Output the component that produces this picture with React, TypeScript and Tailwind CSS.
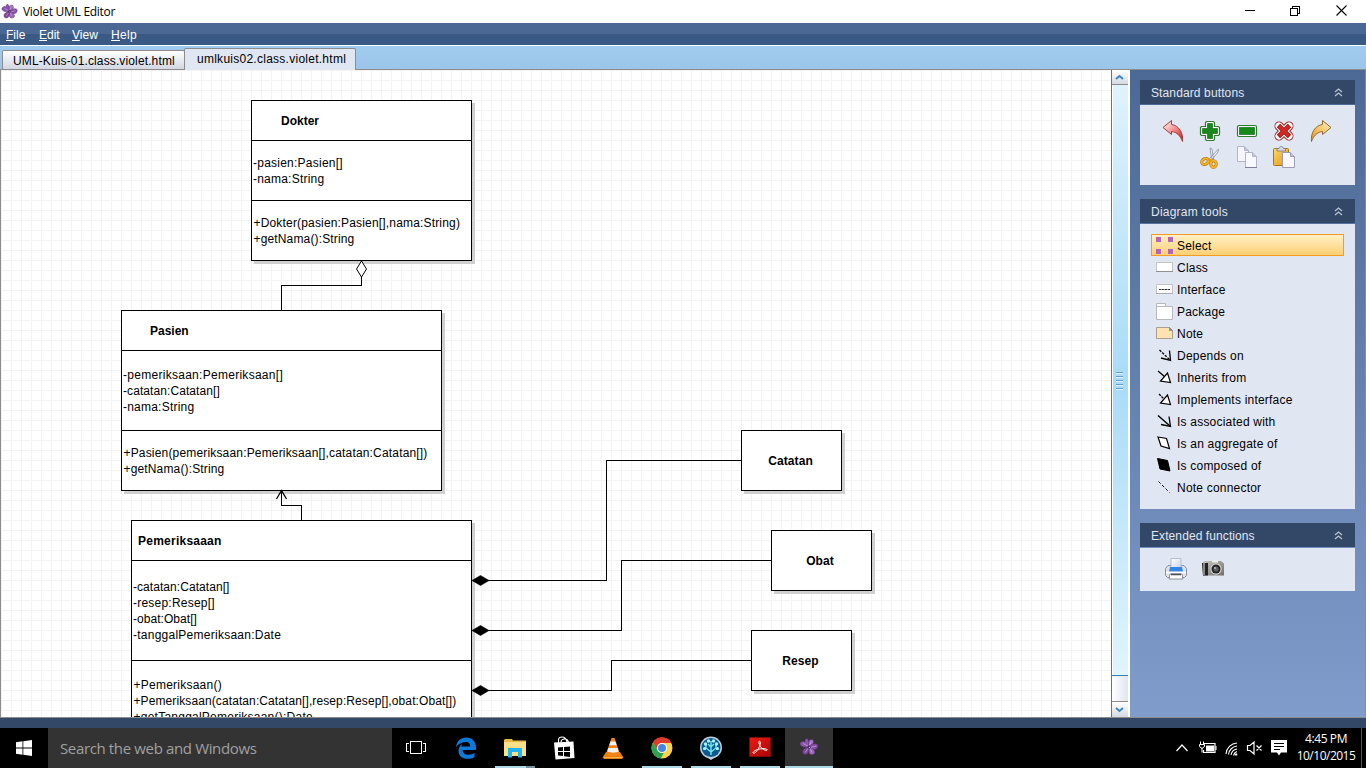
import React from "react";

function VioletFlower({ size }: { size: number }) {
  return (
    <svg width={size} height={size} viewBox="0 0 20 20" className="shrink-0">
      <g stroke="#4c2a63" strokeWidth=".5">
        <path d="M10 10C4 11 1 9 1 6.500 2 4 5 3.500 6 5 5.500 1.500 8 .8 9 2.500 10 4 10.500 7 10 10Z" fill="#8a55ab" />
        <path d="M10 10C9 6 10 2.500 12 2.500 14 2 15 4 14.500 5.500 14 7.500 12 9 10 10Z" fill="#a672c4" />
        <path d="M10 10C13 6 17.500 6 19 8 19.500 10 18 12.500 15.500 12.500 13 13 11 12 10 10Z" fill="#8450a6" />
        <path d="M10 10C14 11.500 17 14 15.500 16.500 13.500 18.500 10.500 18 10 15.500Z" fill="#9c66bd" />
        <path d="M10 10C10.500 15 8.500 18 6 17.500 3.500 17.500 3 15 4 13 5.500 11 8 10 10 10Z" fill="#7c479c" />
      </g>
      <path d="M4 6.500 9 9M12 5 10.500 8M17 9 12 10.500M13 15.500 11 12M6 15.500 9 11.500" stroke="#cfa5e2" strokeWidth=".7" />
      <circle cx="10" cy="10" r="1.500" fill="#4c2763" />
      <circle cx="10.500" cy="10.300" r=".6" fill="#f3c75b" />
    </svg>
  );
}

function TitleBar() {
  return (
    <div className="flex h-[23px] items-center justify-between bg-white pl-[1px] pr-[18px]">
      <div className="flex items-center gap-[5px]">
        <VioletFlower size={17} />
        <span className="font-['Open_Sans',sans-serif] text-[12px] leading-[22px] tracking-[-0.28px] text-black">Violet UML Editor</span>
      </div>
      <svg width="103" height="12" viewBox="0 0 103 12" className="mb-[3px]" fill="none" stroke="#000" shapeRendering="crispEdges">
        <path d="M0 6.500h10" />
        <path d="M45.500 4.500h7v7h-7zM47.500 4V2.500h7v7H53" />
        <path d="m91.500 1.500 10 10m0-10-10 10" shapeRendering="auto" strokeWidth="1.100" />
      </svg>
    </div>
  );
}

function MenuBar() {
  return (
    <div className="flex h-[22px] items-center bg-linear-to-b from-[#4b6793] from-50% to-[#3a5985] to-50% pl-[6px] pt-[2px] text-[12px] leading-[20px] text-white">
      {[
        { key: "F", rest: "ile", w: "w-[33px]" },
        { key: "E", rest: "dit", w: "w-[33px]" },
        { key: "V", rest: "iew", w: "w-[39px]" },
        { key: "H", rest: "elp", w: "w-[40px] tracking-[0.3px]" },
      ].map((m) => (
        <span key={m.key} className={m.w}>
          <span className="underline underline-offset-1">{m.key}</span>
          {m.rest}
        </span>
      ))}
    </div>
  );
}

function TabStrip() {
  return (
    <div className="flex h-[25px] items-end border-t border-b border-t-white border-b-[#8c8c8c] bg-linear-to-b from-[#9fcbef] to-[#9cc6e9] pl-[2px] text-[12px] text-black">
      <div className="flex h-[19px] w-[183px] items-center rounded-t-[2px] border border-b-0 border-[#8c8c8c] bg-linear-to-b from-white to-[#d2d7e2] pl-[10px] pt-[2px] tracking-[0.13px]">
        UML-Kuis-01.class.violet.html
      </div>
      <div className="-mb-px -ml-px flex h-[22px] w-[172px] items-center rounded-t-[2px] border border-b-0 border-[#8c8c8c] bg-[#e0e6f2] pb-[2px] pl-[12px] tracking-[0.26px]">
        umlkuis02.class.violet.html
      </div>
    </div>
  );
}

type Line = { text: string; track: string };

type ClassNode = {
  place: string;
  title: string;
  titleBox: string;
  attrs: Line[];
  attrBox: string;
  methods: Line[];
  methodBox: string;
};

const classNodes: ClassNode[] = [
  {
    place: "left-[250px] top-[30px] w-[221px] h-[161px]",
    title: "Dokter",
    titleBox: "pl-[29px]",
    attrs: [
      { text: "-pasien:Pasien[]", track: "tracking-[0.24px]" },
      { text: "-nama:String", track: "tracking-[0.22px]" },
    ],
    attrBox: "h-[60px] pt-[14px]",
    methods: [
      { text: "+Dokter(pasien:Pasien[],nama:String)", track: "tracking-[0.17px]" },
      { text: "+getNama():String", track: "tracking-[0.15px]" },
    ],
    methodBox: "pt-[14px]",
  },
  {
    place: "left-[120px] top-[240px] w-[321px] h-[181px]",
    title: "Pasien",
    titleBox: "pl-[28px]",
    attrs: [
      { text: "-pemeriksaan:Pemeriksaan[]", track: "tracking-[0.28px]" },
      { text: "-catatan:Catatan[]", track: "tracking-[0.08px]" },
      { text: "-nama:String", track: "tracking-[0.22px]" },
    ],
    attrBox: "h-[80px] pt-[16px]",
    methods: [
      { text: "+Pasien(pemeriksaan:Pemeriksaan[],catatan:Catatan[])", track: "tracking-[0.17px]" },
      { text: "+getNama():String", track: "tracking-[0.15px]" },
    ],
    methodBox: "pt-[14px]",
  },
  {
    place: "left-[130px] top-[450px] w-[341px] h-[221px]",
    title: "Pemeriksaaan",
    titleBox: "pl-[6px] tracking-[0.24px]",
    attrs: [
      { text: "-catatan:Catatan[]", track: "tracking-[0.06px]" },
      { text: "-resep:Resep[]", track: "tracking-[0.22px]" },
      { text: "-obat:Obat[]", track: "tracking-[0.05px]" },
      { text: "-tanggalPemeriksaan:Date", track: "tracking-[0.25px]" },
    ],
    attrBox: "h-[100px] pt-[18px]",
    methods: [
      { text: "+Pemeriksaan()", track: "tracking-[0.24px]" },
      { text: "+Pemeriksaan(catatan:Catatan[],resep:Resep[],obat:Obat[])", track: "tracking-[0.1px]" },
      { text: "+getTanggalPemeriksaan():Date", track: "tracking-[0.24px]" },
    ],
    methodBox: "pt-[16px]",
  },
];

const simpleNodes = [
  { place: "left-[740px] top-[360px] pr-[2px]", title: "Catatan" },
  { place: "left-[770px] top-[460px] pr-[3px]", title: "Obat" },
  { place: "left-[750px] top-[560px] pr-[2px]", title: "Resep" },
];

function Canvas() {
  return (
    <div className="relative w-[1111px] overflow-hidden border-l border-[#8c8c8c] bg-white text-[12px] leading-[16px] text-black">
      <svg className="absolute left-0 top-0" width="1110" height="647" viewBox="1 70 1110 647">
        <defs>
          <pattern id="grid" x="1" y="70" width="10" height="10" patternUnits="userSpaceOnUse">
            <path d="M0 .5h10M.5 0v10" stroke="#f3f3f3" shapeRendering="crispEdges" />
          </pattern>
        </defs>
        <rect x="1" y="70" width="1110" height="647" fill="url(#grid)" />
      </svg>
      {classNodes.map((n) => (
        <div key={n.title} className={`absolute flex flex-col border border-black bg-white shadow-[3px_3px_0_#d0d0d0] ${n.place}`}>
          <div className={`h-[40px] shrink-0 border-b border-black pt-[12px] font-bold ${n.titleBox}`}>{n.title}</div>
          <div className={`shrink-0 border-b border-black pl-px ${n.attrBox}`}>
            {n.attrs.map((a) => (
              <div key={a.text} className={`whitespace-nowrap ${a.track}`}>{a.text}</div>
            ))}
          </div>
          <div className={`pl-[1.5px] ${n.methodBox}`}>
            {n.methods.map((a) => (
              <div key={a.text} className={`whitespace-nowrap ${a.track}`}>{a.text}</div>
            ))}
          </div>
        </div>
      ))}
      {simpleNodes.map((n) => (
        <div key={n.title} className={`absolute flex h-[61px] w-[101px] items-center justify-center border border-black bg-white font-bold tracking-[0.1px] shadow-[3px_3px_0_#d0d0d0] ${n.place}`}>
          {n.title}
        </div>
      ))}
      <svg className="absolute left-0 top-0" width="1110" height="647" viewBox="1 70 1110 647" fill="none" stroke="#000">
        <g shapeRendering="crispEdges">
          <path d="M361.500 277v8.500h-80V310" />
          <path d="M281.500 491v14.500h20V520" />
          <path d="M488 580.500h118.500v-120H741" />
          <path d="M488 630.500h133.500v-70H771" />
          <path d="M488 690.500h123.500v-30H751" />
        </g>
        <path d="M361.500 261l5 8-5 8-5-8z" fill="#fff" />
        <path d="M276.500 499l5-8.500 5 8.500" strokeWidth="1.300" />
        <path d="M472 580.500l8.500-5 8.500 5-8.500 5zM472 630.500l8.500-5 8.500 5-8.500 5zM472 690.500l8.500-5 8.500 5-8.500 5z" fill="#000" strokeWidth=".6" />
      </svg>
    </div>
  );
}

function ScrollBar() {
  return (
    <div className="flex w-[19px] flex-col border-l border-r-2 border-l-[#3c7fb1] border-r-white">
      <div className="flex h-[15px] items-center justify-center border-b border-[#8c8c8c] bg-linear-to-b from-white to-[#d4d9e3] pr-px">
        <svg width="9" height="6" viewBox="0 0 9 6" fill="none" stroke="#3a87bd" strokeWidth="2"><path d="m1 5 3.500-3L8 5" /></svg>
      </div>
      <div className="flex h-[590px] flex-col items-center justify-center gap-[3px] border-l border-white bg-linear-to-b from-[#dff3fd] via-[#a9dbf7] to-[#e0f5fd] pr-[2px]">
        {[0, 1, 2, 3, 4].map((i) => (
          <div key={i} className="h-px w-[7px] bg-[#5e9fd0] shadow-[0_1px_0_#e3f4fd]" />
        ))}
      </div>
      <div className="h-[27px] border-t border-b border-t-[#3c7fb1] border-b-[#8c8c8c] bg-linear-to-r from-white to-[#dfe5f1]" />
      <div className="flex flex-1 items-center justify-center bg-linear-to-b from-white to-[#d4d9e3] pr-px">
        <svg width="9" height="6" viewBox="0 0 9 6" fill="none" stroke="#3a87bd" strokeWidth="2"><path d="m1 1 3.500 3L8 1" /></svg>
      </div>
    </div>
  );
}

function Panel({ title, track, body, children }: { title: string; track: string; body: string; children: React.ReactNode }) {
  return (
    <section className="w-[215px]">
      <div className="flex h-[24px] items-center justify-between bg-[#334866] pl-[11px] pr-[12px] text-[12px] text-[#e0e6f2]">
        <span className={`pt-[2px] ${track}`}>{title}</span>
        <svg width="9" height="9" viewBox="0 0 9 9" fill="none" stroke="#b8c2d3" strokeWidth="1.300"><path d="m1 4 3.500-3L8 4M1 8l3.500-3L8 8" /></svg>
      </div>
      <div className={`mt-px bg-[#e0e6f2] ${body}`}>{children}</div>
    </section>
  );
}

function StandardButtons() {
  return (
    <Panel title="Standard buttons" track="tracking-[0.12px]" body="h-[80px] pr-[2px] pt-[14px]">
      <div className="flex h-[25px] justify-center gap-[15px]">
        <svg width="22" height="24" viewBox="0 0 22 24">
          <defs><linearGradient id="undo" x2="1" y2="1"><stop stopColor="#fff" /><stop offset=".45" stopColor="#f59a9a" /><stop offset="1" stopColor="#d20f0f" /></linearGradient></defs>
          <path d="M1 8.500 9.500 1.500V5.500C17 6.500 21.500 14 20.500 22.500 18.500 17 15 13 9.500 12.500V15.500z" fill="url(#undo)" stroke="#a33e3e" />
        </svg>
        <svg width="22" height="24" viewBox="0 0 22 24">
          <path d="M7.500 2.500h7l1 1v4h4l1 1v7l-1 1h-4v4l-1 1h-7l-1-1v-4h-4l-1-1v-7l1-1h4v-4z" fill="#fff" stroke="#2f7c2f" strokeWidth="1.200" />
          <path d="M8.500 4.500h5v5h5v5h-5v5h-5v-5h-5v-5h5z" fill="#16891a" stroke="#075d0a" strokeWidth=".6" />
        </svg>
        <svg width="22" height="24" viewBox="0 0 22 24">
          <rect x="1.500" y="6.500" width="19" height="11" rx="1.500" fill="#fff" stroke="#2f7c2f" strokeWidth="1.200" />
          <path d="M3.500 8.500h15v7h-15z" fill="#16891a" stroke="#075d0a" strokeWidth=".6" />
        </svg>
        <svg width="22" height="24" viewBox="0 0 22 24">
          <path d="M6 7 16 17M16 7 6 17" stroke="#a11717" strokeWidth="9" strokeLinecap="round" />
          <path d="M6 7 16 17M16 7 6 17" stroke="#fff" strokeWidth="7.200" strokeLinecap="round" />
          <path d="M5.500 6.500 16.500 17.500M16.500 6.500 5.500 17.500" stroke="#8f0d0d" strokeWidth="4.600" />
          <path d="M6 7 16 17M16 7 6 17" stroke="#d4281f" strokeWidth="3.400" />
        </svg>
        <svg width="22" height="24" viewBox="0 0 22 24">
          <defs><linearGradient id="redo" x1="1" x2="0" y2="1"><stop stopColor="#fff0c8" /><stop offset=".45" stopColor="#f9cb70" /><stop offset="1" stopColor="#ed9110" /></linearGradient></defs>
          <path d="M21 8.500 12.500 1.500V5.500C5 6.500.5 14 1.500 22.500 3.500 17 7 13 12.500 12.500V15.500z" fill="url(#redo)" stroke="#8f6a2c" />
        </svg>
      </div>
      <div className="mt-[2px] flex h-[25px] justify-center gap-[15px]">
        <svg width="22" height="24" viewBox="0 0 22 24" fill="none">
          <path d="M11 2l1.500 10.500 2 .5L13 3zM19.500 3l-9 9.500 2 1.500L19 6z" fill="#eef1f7" stroke="#8a91a2" strokeWidth=".8" />
          <ellipse cx="6" cy="15.500" rx="3.500" ry="2.700" transform="rotate(-30 6 15.500)" stroke="#ad7208" strokeWidth="3" />
          <ellipse cx="14.500" cy="18" rx="2.700" ry="3.300" stroke="#ad7208" strokeWidth="3" />
          <ellipse cx="6" cy="15.500" rx="3.500" ry="2.700" transform="rotate(-30 6 15.500)" stroke="#f7b52a" strokeWidth="1.800" />
          <ellipse cx="14.500" cy="18" rx="2.700" ry="3.300" stroke="#f7b52a" strokeWidth="1.800" />
          <path d="m9 13.500 4 1" stroke="#e69b13" strokeWidth="2" />
        </svg>
        <svg width="22" height="24" viewBox="0 0 22 24" stroke="#b4b4c8">
          <path d="M1.500.500h7l4 4v11h-11z" fill="#f5f5fd" /><path d="M8.500.500v4h4" fill="#c6c6da" />
          <path d="M9.500 6.500h7l4 4v11h-11z" fill="#f8f8ff" /><path d="M16.500 6.500v4h4" fill="#c6c6da" />
          <path d="M9 21.500h12" stroke="#7f7f9d" />
        </svg>
        <svg width="22" height="24" viewBox="0 0 22 24">
          <defs><linearGradient id="clip" y2="1"><stop stopColor="#fbd968" /><stop offset="1" stopColor="#e49516" /></linearGradient></defs>
          <rect x=".5" y="2.500" width="15" height="17" rx="1" fill="url(#clip)" stroke="#a8741a" />
          <path d="M4 5V2.500h2C6.500-.2 10-.2 10.500 2.500h2V5z" fill="#d6d9e5" stroke="#74788b" strokeWidth=".8" />
          <path d="M9.500 6.500h8l4 4v11h-12z" fill="#f8f8ff" stroke="#9c9cb6" /><path d="M17.500 6.500v4h4" fill="#c6c6da" stroke="#9c9cb6" />
        </svg>
      </div>
    </Panel>
  );
}

const tools: { label: string; icon: React.ReactNode }[] = [
  { label: "Select", icon: <path d="M0 3h5v5H0zM12 3h5v5h-5zM0 15h5v5H0zM12 15h5v5h-5z" fill="#b565b5" /> },
  { label: "Class", icon: (<><path d="M.5 6.500h16v9H.5z" fill="#fff" stroke="#c4c4c8" /><path d="M0 15.500h17" stroke="#909090" /></>) },
  { label: "Interface", icon: (<><path d="M.5 6.500h16v9H.5z" fill="#fff" stroke="#c4c4c8" /><path d="M0 15.500h17" stroke="#aaa" /><path d="M3 11.500h11" stroke="#333" strokeDasharray="2.500 .5" /></>) },
  { label: "Package", icon: <path d="M.5 3.500h9v3h7v13H.5zM.5 6.500h9" fill="#fff" stroke="#b8b8bc" /> },
  { label: "Note", icon: (<><path d="M.5 5.500h13l3 3v8H.5z" fill="#ffe2b0" stroke="#a99f8e" /><path d="M13.500 5.500v3h3z" fill="#888" stroke="#777" strokeWidth=".5" /></>) },
  { label: "Depends on", icon: (<><path d="M3.500 6l11 10.500" stroke="#000" strokeWidth="1.300" strokeDasharray="2.500 1.200" /><path d="M13.500 6.500l1 10-9.500-2.500" fill="none" stroke="#000" strokeWidth="1.300" /></>) },
  { label: "Inherits from", icon: (<><path d="M2 5l7 6" stroke="#000" strokeWidth="1.300" /><path d="M11.500 7l3 9.500-10-1.500z" fill="#fff" stroke="#000" strokeWidth="1.200" /></>) },
  { label: "Implements interface", icon: (<><path d="M3 6l6 6" stroke="#000" strokeWidth="1.300" strokeDasharray="2.500 1" /><path d="M11.500 7l3 9.500-10-1.500z" fill="#fff" stroke="#000" strokeWidth="1.200" /></>) },
  { label: "Is associated with", icon: (<><path d="M2 5.500l12 10.500" stroke="#000" strokeWidth="1.400" /><path d="M13 6.500l1.500 10-9.500-2" fill="none" stroke="#000" strokeWidth="1.300" /></>) },
  { label: "Is an aggregate of", icon: <path d="M2 5l8.500 1.500 3 10L5 14z" fill="#fff" stroke="#000" strokeWidth="1.200" /> },
  { label: "Is composed of", icon: <path d="M1.500 4.500l10 2 2.500 10.500-10-2z" fill="#000" stroke="#000" /> },
  { label: "Note connector", icon: <path d="M2.500 5.500l11 11" stroke="#000" strokeDasharray="3 2" /> },
];

function DiagramTools() {
  return (
    <Panel title="Diagram tools" track="tracking-[0.22px]" body="h-[285px] pl-[11px] pt-[10px]">
      {tools.map((t, i) => (
        <div
          key={t.label}
          className={
            i === 0
              ? "flex h-[22px] w-[193px] items-center gap-[4px] border border-[#f29b25] bg-linear-to-b from-[#fff0c4] to-[#ffcf73] pl-[4px]"
              : "flex h-[22px] w-[193px] items-center gap-[4px] pl-[5px]"
          }
        >
          <svg width="17" height="22" viewBox="0 0 17 22" className="shrink-0">{t.icon}</svg>
          <span className="pt-px text-[12px] leading-[20px] tracking-[0.21px] text-black">{t.label}</span>
        </div>
      ))}
    </Panel>
  );
}

function ExtendedFunctions() {
  return (
    <Panel title="Extended functions" track="tracking-[0.09px]" body="h-[43px] pl-[24px] pt-[9px]">
      <div className="flex gap-[13px]">
        <svg width="24" height="24" viewBox="0 0 24 24">
          <defs><linearGradient id="paper" x2="1" y2="1"><stop stopColor="#fff" /><stop offset="1" stopColor="#c9d7e8" /></linearGradient></defs>
          <path d="M1.500 11.500 4 8.500h16l2.500 3v7l-2 2h-17l-2-2z" fill="#dfe1e7" stroke="#8a8e9a" />
          <path d="M7 1.500h10v9H7z" fill="url(#paper)" stroke="#b3bfd0" />
          <path d="M6 10h12l1 4.500H5z" fill="#3186e4" />
          <path d="M2 15.500h20" stroke="#fff" strokeWidth="1.500" />
          <path d="M6 17h12l1 5H5z" fill="#fff" stroke="#8c919d" /><path d="M7 17.500h10" stroke="#4a4a52" strokeWidth="1.500" />
        </svg>
        <svg width="24" height="24" viewBox="0 0 24 24">
          <defs><linearGradient id="body" y2="1"><stop stopColor="#c7c6bf" /><stop offset="1" stopColor="#6f6e69" /></linearGradient></defs>
          <path d="M1 6.500 3 4h17l3 2.500v12H2z" fill="url(#body)" />
          <path d="M1 6h6v12.500H2z" fill="#222" /><path d="M3 6v12" stroke="#aaa" strokeWidth="1.500" />
          <path d="M11 4.500h6" stroke="#f2f2e8" strokeWidth="2" />
          <circle cx="15" cy="12" r="5.700" fill="#d3d2cd" /><circle cx="15" cy="12" r="4.500" fill="#252525" />
          <circle cx="15" cy="12" r="2.500" fill="#5d6165" /><circle cx="14" cy="11" r="1" fill="#bbb" />
        </svg>
      </div>
    </Panel>
  );
}

function Taskbar() {
  const cell = "flex h-[40px] w-[49px] shrink-0 items-center justify-center";
  return (
    <div className="flex h-[40px] bg-black">
      <div className="flex w-[48px] items-center justify-center">
        <svg width="16" height="16" viewBox="0 0 16 16" fill="#fff"><path d="M0 2.200 6.500 1.300V7.500H0zM7.300 1.200 16 0v7.500H7.300zM0 8.500h6.500v6.200L0 13.800zM7.300 8.500H16V16l-8.700-1.200z" /></svg>
      </div>
      <div className="flex w-[344px] items-center bg-[#333] pl-[12px] font-['Open_Sans',sans-serif] text-[15px] tracking-[-0.36px] text-[#a0a0a0]">
        Search the web and Windows
      </div>
      <div className="flex h-[40px] w-[49px] shrink-0 items-center justify-center pr-px">
        <svg width="20" height="14" viewBox="0 0 20 14" fill="none" stroke="#fff" shapeRendering="crispEdges"><path d="M4.500.500h11v12h-11zM3 2.500H.5v8H3M17 2.500h2.500v8H17" /></svg>
      </div>
      <div className={cell}>
        <svg width="20" height="22" viewBox="0 0 20 22"><path d="M0 10C.8 4 4.700.500 10.300.500 16.500.500 20 5 20 10v3H6.500c.3 3.500 3.200 4.700 6.200 4.700 2.200 0 4-.7 5.800-1.700v4.300c-2 1-4.300 1.500-7 1.500-5.500 0-9-3-9-7.800 0-3.200 1.500-5.700 4.300-7.200-1 .9-1.200 1.800-1.400 2.700h8.800c0-3-1.300-4.500-4-4.500C6.500 5 2.600 6.500 0 10z" fill="#0e79d8" /></svg>
      </div>
      <div className="relative flex h-[40px] w-[49px] shrink-0 items-center justify-center">
        <svg width="22" height="20" viewBox="0 0 22 20">
          <path d="M0 2 1 1h7l1 1.500h13V18H0z" fill="#e8b84a" /><path d="M0 4h22v14H0z" fill="#fbdf88" />
          <path d="M4 10h14v9.500h-4V14H8v5.500H4z" fill="#22b5f0" />
        </svg>
        <div className="absolute bottom-0 left-[5px] flex h-[2px] w-[40px] bg-[#add8e6]"><div className="ml-auto w-[9px] bg-[#7893a0]" /></div>
      </div>
      <div className={cell}>
        <svg width="22" height="24" viewBox="0 0 22 24">
          <path d="M5.500 7V4C5.500 2 7 1 9 1s4 1 5 5M8 6c0-3 6-5 7.500 0" fill="none" stroke="#fff" strokeWidth="1.100" />
          <path d="M1 6.500 20.500 5.500 21.500 22 2.500 23.500z" fill="#fff" />
          <path d="M5 11.500 10 11v4H5zM11 11l6-.5V15h-6zM5 16h5v4l-5-.5zM11 16h6v5l-6-.7z" fill="#000" />
        </svg>
      </div>
      <div className={cell}>
        <svg width="22" height="24" viewBox="0 0 22 24">
          <path d="M4 16h14l3.500 5.500L20 23H2L.5 21.500z" fill="#e87e0c" /><path d="M2 21.500h18" stroke="#ffb34d" />
          <path d="M9.500 2h3L18 18c-2 3-12 3-14 0z" fill="#f28316" />
          <path d="M8.500 5.500h5l1.200 3.700H7.300zM6.300 12h9.400l1 3.500c-3 1.500-8 1.500-11.500 0z" fill="#f0f0f0" />
        </svg>
      </div>
      <div className="relative flex h-[40px] w-[49px] shrink-0 items-center justify-center">
        <svg width="22" height="22" viewBox="0 0 22 22">
          <circle cx="11" cy="11" r="10.500" fill="#fcd34b" />
          <path d="M2 5.500A10.500 10.500 0 0 1 20.500 6H11a5 5 0 0 0-4.500 7z" fill="#df3b2f" />
          <path d="M2 5.500 6.700 13.500A5 5 0 0 0 13 15.500L9.700 21.400A10.500 10.500 0 0 1 2 5.500z" fill="#2ca14e" />
          <circle cx="11" cy="11" r="5" fill="#fff" /><circle cx="11" cy="11" r="4" fill="#4286e8" />
        </svg>
        <div className="absolute bottom-0 left-[5px] h-[2px] w-[40px] bg-[#add8e6]" />
      </div>
      <div className="relative flex h-[40px] w-[49px] shrink-0 items-center justify-center">
        <svg width="24" height="24" viewBox="0 0 24 24">
          <path d="M5 18h14l-4 4-3 2-3-2z" fill="#bcd3e0" /><circle cx="12" cy="11.500" r="11" fill="#b8cfdd" /><circle cx="12" cy="11.500" r="9.500" fill="#0d5a8f" />
          <path d="M12 19V5M12 16 7 12V8M12 16l5-4V8M12 11 9 8M12 11l3-3M7 13H4.500M17 13h2.500" stroke="#79e3ed" fill="none" strokeWidth="1.400" />
          <g fill="#a7f2f6"><circle cx="9.500" cy="5" r="1.700" /><circle cx="14.500" cy="5" r="1.700" /><circle cx="6.500" cy="8" r="1.700" /><circle cx="17.500" cy="8" r="1.700" /><circle cx="5.500" cy="12.500" r="1.500" /><circle cx="18.500" cy="12.500" r="1.500" /></g>
        </svg>
        <div className="absolute bottom-0 left-[5px] h-[2px] w-[40px] bg-[#add8e6]" />
      </div>
      <div className="relative flex h-[40px] w-[49px] shrink-0 items-center justify-center">
        <svg width="22" height="22" viewBox="0 0 22 22">
          <defs><linearGradient id="pdf" y2="1"><stop stopColor="#ed1c14" /><stop offset="1" stopColor="#a90505" /></linearGradient></defs>
          <path d="M.5.500h21v19h-21z" fill="url(#pdf)" stroke="#7d0909" />
          <path d="M4 15.500c1-2 5-3.500 9-3.800 3-.2 5.500.3 5.200 1.300-.6 1-4-.3-5.600-2C10.500 9 9.500 5.500 10 4.500c.7-1 1.600 0 1.200 2.500-.5 3-2.700 6.500-4.700 8.500-1 1-2.500 1-2.500 0z" fill="none" stroke="#fff" />
        </svg>
        <div className="absolute bottom-0 left-[5px] h-[2px] w-[40px] bg-[#add8e6]" />
      </div>
      <div className="ml-px flex w-[48px] items-center justify-center border-b-2 border-[#add8e6] bg-[#333] pr-px">
        <VioletFlower size={20} />
      </div>
      <div className="ml-auto flex items-center pr-[4px]">
        <svg width="116" height="24" viewBox="0 0 116 24" fill="none" stroke="#fff">
          <path d="m4.500 15 5.500-6 5.500 6" strokeWidth="1.200" />
          <path d="M31.500 7.500h11.500v9H31.500V14" strokeWidth="1.200" /><path d="M44 10v4" /><path d="M34 9.500h8v6h-8z" fill="#fff" stroke="none" />
          <path d="M27.500 8.500h5v2l-2.500 2-2.500-2zM28.500 8V5.500M31.500 8V5.500M30 12v4.500" />
          <path d="M54 18C54.500 12 59 7.500 65 7M56.500 18.500C57 14 60.500 10.500 65 10M59 19c.5-3 3-5.500 6-6M61.500 19.500c.5-2 2-3.500 3.500-4" strokeWidth="1.100" /><path d="M64 17.500v2" strokeWidth="2.500" />
          <path d="M75.500 9.500h2.500l4-3.500v12l-4-3.500h-2.500zM84.500 9.500l5 5m0-5-5 5" strokeWidth="1.200" />
          <path d="M99 4h16v12.500h-6L107 19.500 105 16.500h-6z" fill="#fff" stroke="none" /><path d="M102 7.500h10M102 10.500h10M102 13.500h6" stroke="#000" />
        </svg>
        <div className="flex w-[73px] flex-col items-center pb-[2px] pl-[3px] font-['Open_Sans',sans-serif] text-[12px] leading-[17px] text-white">
          <span className="tracking-[-0.4px]">4:45 PM</span>
          <span className="tracking-[-0.5px]">10/10/2015</span>
        </div>
        <div className="h-[40px] w-px bg-[#555]" />
      </div>
    </div>
  );
}

export default function App() {
  return (
    <div className="flex h-[768px] w-[1366px] flex-col overflow-hidden font-['Liberation_Sans',Arial,sans-serif]">
      <TitleBar />
      <MenuBar />
      <TabStrip />
      <div className="flex h-[647px]">
        <Canvas />
        <ScrollBar />
        <aside className="flex flex-1 flex-col gap-[14px] border-r border-[#8c8c8c] bg-linear-to-b from-[#4c6894] to-[#7f9ccb] pl-[10px] pt-[10px]">
          <StandardButtons />
          <DiagramTools />
          <ExtendedFunctions />
        </aside>
      </div>
      <div className="h-[11px] border-t border-[#8c8c8c] bg-[#334866]" />
      <Taskbar />
    </div>
  );
}
